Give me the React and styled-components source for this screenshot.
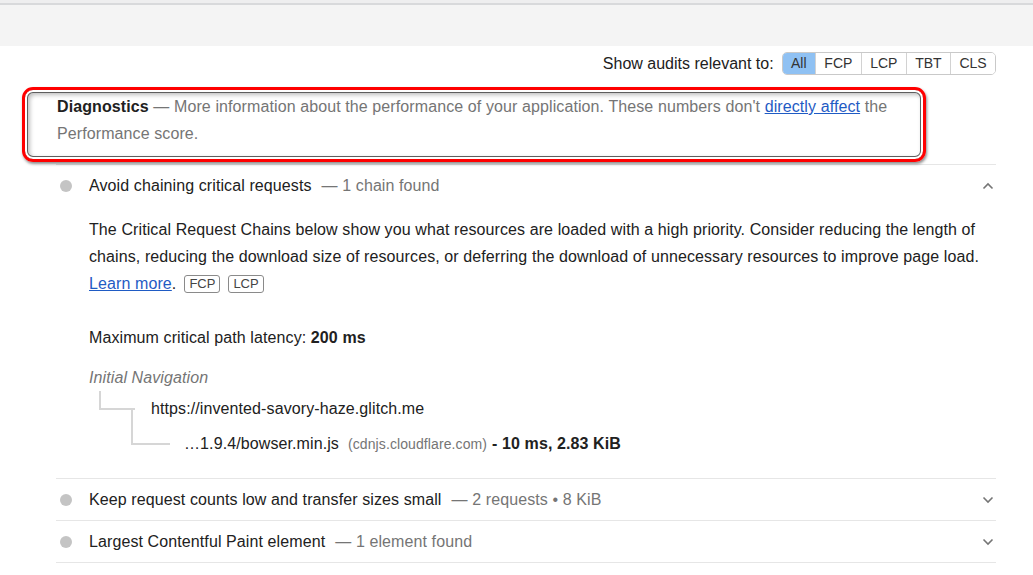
import React from "react";
import styled, { createGlobalStyle } from "styled-components";

const GlobalStyle = createGlobalStyle`
  html, body { margin: 0; padding: 0; background: #ffffff; }
  body {
    font-family: "Liberation Sans", Arial, sans-serif;
    color: #212121;
    letter-spacing: 0.1px;
  }
  * { box-sizing: border-box; }
`;

const Page = styled.div`
  width: 1033px;
  min-height: 575px;
  overflow: hidden;
`;

const TopStrip = styled.div`
  background: #eeeeef;
  padding-top: 3px;
`;

const TopBand = styled.div`
  height: 43px;
  background: #f4f4f4;
  border-top: 2px solid #d8d9db;
`;

const Main = styled.main`
  padding: 0 37px 0 56px;
`;

const FilterBar = styled.div`
  display: flex;
  justify-content: flex-end;
  align-items: center;
  gap: 8px;
  margin-top: 6px;
  height: 23px;
`;

const FilterLabel = styled.span`
  font-size: 16px;
  letter-spacing: 0;
  color: #212121;
`;

const FilterGroup = styled.div`
  display: flex;
  border: 1px solid #c9c9c9;
  border-radius: 5px;
  overflow: hidden;
  height: 23px;
`;

const FilterButton = styled.button`
  font-family: inherit;
  font-size: 14px;
  line-height: 21px;
  letter-spacing: 0;
  padding: 0 8.4px;
  margin: 0;
  border: none;
  border-left: ${(p) => (p.$first ? "none" : "1px solid #d2d2d2")};
  background: ${(p) => (p.$active ? "#8fc1f3" : "#ffffff")};
  color: #333333;
  cursor: pointer;
`;

const GroupHeader = styled.div`
  position: relative;
  margin-top: 18px;
  padding: 0 0 17px 1px;
  font-size: 16px;
  line-height: 27px;
  color: #757575;
`;

const GroupLine = styled.div`
  white-space: nowrap;
`;

const GroupTitle = styled.span`
  font-weight: bold;
  color: #212121;
`;

const Link = styled.a`
  color: #1f5bc4;
  text-decoration: underline;
  cursor: pointer;
`;

const Highlight = styled.div`
  position: absolute;
  left: -34px;
  top: -6px;
  width: 904px;
  height: 75px;
  border: 3px solid #ff0000;
  border-radius: 11px;
  pointer-events: none;
  box-shadow:
    1px 2px 3px rgba(0, 0, 0, 0.45),
    0 0 0 1px rgba(255, 255, 255, 0.9),
    inset 0 0 0 2px #ffffff,
    inset 0 0 0 3px #5e5e5e,
    inset 2px 2px 4px 3px rgba(0, 0, 0, 0.25);
`;

const AuditList = styled.div`
  border-bottom: 1px solid #e6e6e6;
`;

const AuditRow = styled.div`
  border-top: 1px solid #e6e6e6;
`;

const AuditHeader = styled.div`
  display: flex;
  align-items: center;
  height: 41px;
  padding: 0 2px 0 4px;
  font-size: 16px;
`;

const Dot = styled.span`
  width: 12px;
  height: 12px;
  border-radius: 50%;
  background: #c4c4c4;
  margin-right: 17px;
  flex: none;
`;

const AuditTitle = styled.span`
  color: #212121;
`;

const DisplayValue = styled.span`
  color: #757575;
  margin-left: 10px;
`;

const Chevron = styled.svg`
  margin-left: auto;
  flex: none;
`;

const AuditBody = styled.div`
  padding: 10px 0 17px 33px;
  font-size: 16px;
  line-height: 27px;
  color: #212121;
`;

const Description = styled.p`
  margin: 0;
`;

const Badge = styled.span`
  display: inline-block;
  font-size: 13px;
  line-height: 16px;
  padding: 0 4px;
  border: 1px solid #8a8a8a;
  border-radius: 3px;
  color: #444444;
  margin-left: 8px;
  vertical-align: 1px;
  letter-spacing: 0;
`;

const Summary = styled.p`
  margin: 27px 0 0;
`;

const Strong = styled.strong`
  font-weight: bold;
`;

const TreeRoot = styled.div`
  margin-top: 13px;
  font-style: italic;
  color: #757575;
`;

const TreeRow = styled.div`
  display: flex;
  align-items: center;
  height: 35px;
  padding-left: ${(p) => p.$indent}px;
`;

const Elbow = styled.span`
  align-self: flex-start;
  flex: none;
  width: ${(p) => p.$width}px;
  height: calc(50% + 1px);
  border-left: 2px solid #d6d6d6;
  border-bottom: 2px solid #d6d6d6;
`;

const Tee = styled.span`
  align-self: flex-end;
  flex: none;
  width: 4px;
  height: calc(50% + 1px);
  border-left: 2px solid #d6d6d6;
  border-top: 2px solid #d6d6d6;
`;

const NodeText = styled.span`
  margin-left: ${(p) => p.$gap}px;
  white-space: nowrap;
`;

const Host = styled.span`
  font-size: 14px;
  color: #757575;
  margin: 0 5px 0 9px;
`;

const ChevronIcon = ({ up }) => (
  <Chevron width="12" height="8" viewBox="0 0 12 8">
    <polyline
      points={up ? "1.5,6.5 6,2 10.5,6.5" : "1.5,1.5 6,6 10.5,1.5"}
      fill="none"
      stroke="#757575"
      strokeWidth="1.6"
    />
  </Chevron>
);

const Audit = ({ title, value, expanded, children }) => (
  <AuditRow>
    <AuditHeader>
      <Dot />
      <AuditTitle>{title}</AuditTitle>
      <DisplayValue>— {value}</DisplayValue>
      <ChevronIcon up={expanded} />
    </AuditHeader>
    {expanded && <AuditBody>{children}</AuditBody>}
  </AuditRow>
);

const metrics = ["All", "FCP", "LCP", "TBT", "CLS"];

export default function App() {
  return (
    <Page>
      <GlobalStyle />
      <TopStrip>
        <TopBand />
      </TopStrip>
      <Main>
        <FilterBar>
          <FilterLabel>Show audits relevant to:</FilterLabel>
          <FilterGroup>
            {metrics.map((m, i) => (
              <FilterButton key={m} $active={m === "All"} $first={i === 0}>
                {m}
              </FilterButton>
            ))}
          </FilterGroup>
        </FilterBar>

        <GroupHeader>
          <GroupLine>
            <GroupTitle>Diagnostics</GroupTitle>
            <span> — More information about the performance of your application. These numbers don't </span>
            <Link>directly affect</Link>
            <span> the</span>
          </GroupLine>
          <GroupLine>Performance score.</GroupLine>
          <Highlight />
        </GroupHeader>

        <AuditList>
          <Audit title="Avoid chaining critical requests" value="1 chain found" expanded>
            <Description>
              The Critical Request Chains below show you what resources are loaded
              with a high priority. Consider reducing the length of chains, reducing
              the download size of resources, or deferring the download of
              unnecessary resources to improve page load. <Link>Learn more</Link>.
              <Badge>FCP</Badge>
              <Badge>LCP</Badge>
            </Description>
            <Summary>
              Maximum critical path latency: <Strong>200 ms</Strong>
            </Summary>
            <TreeRoot>Initial Navigation</TreeRoot>
            <TreeRow $indent={10}>
              <Elbow $width={32} />
              <Tee />
              <NodeText $gap={16}>https://invented-savory-haze.glitch.me</NodeText>
            </TreeRow>
            <TreeRow $indent={42}>
              <Elbow $width={39} />
              <NodeText $gap={14}>
                …1.9.4/bowser.min.js
                <Host>(cdnjs.cloudflare.com)</Host>
                <Strong>- 10 ms, 2.83 KiB</Strong>
              </NodeText>
            </TreeRow>
          </Audit>
          <Audit
            title="Keep request counts low and transfer sizes small"
            value="2 requests • 8 KiB"
          />
          <Audit title="Largest Contentful Paint element" value="1 element found" />
        </AuditList>
      </Main>
    </Page>
  );
}
